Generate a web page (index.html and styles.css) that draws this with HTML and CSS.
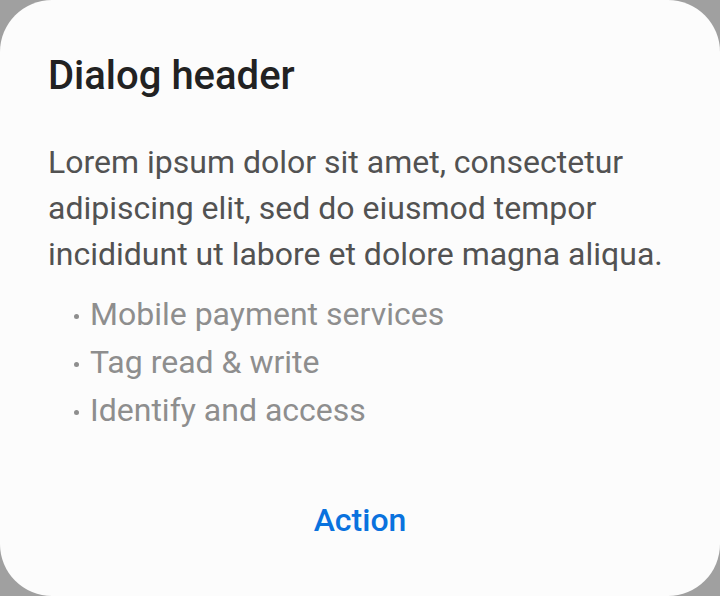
FILE: index.html
```html
<!DOCTYPE html>
<html>
<head>
<meta charset="utf-8">
<link rel="stylesheet" href="styles.css">
</head>
<body>
<div class="dialog">
  <h1 class="title">Dialog header</h1>
  <p class="body">Lorem ipsum dolor sit amet, consectetur adipiscing elit, sed do eiusmod tempor incididunt ut labore et dolore magna aliqua.</p>
  <ul class="list">
    <li>Mobile payment services</li>
    <li>Tag read &amp; write</li>
    <li>Identify and access</li>
  </ul>
  <div class="actions"><button class="action">Action</button></div>
</div>
</body>
</html>
```
FILE: styles.css
```css
html, body { margin: 0; padding: 0; }
body {
  background: #a0a0a0;
  width: 720px;
  height: 596px;
  font-family: Roboto, "Noto Sans", sans-serif;
}
.dialog {
  box-sizing: border-box;
  width: 720px;
  height: 596px;
  background: #fcfcfc;
  border-radius: 52px;
  padding: 52px 48px 0 48px;
  display: flex;
  flex-direction: column;
}
.title {
  margin: 0;
  font-size: 40px;
  font-weight: 500;
  line-height: 48px;
  color: #222222;
}
.body {
  margin: 39px 0 0 0;
  font-size: 32px;
  line-height: 46px;
  color: #525252;
}
.list {
  margin: 13px 0 0 0;
  padding: 0 0 0 26px;
  list-style: none;
  font-size: 32px;
  line-height: 48px;
  color: #8e8e8e;
}
.list li::before {
  content: "";
  display: inline-block;
  width: 5px;
  height: 5px;
  border-radius: 50%;
  background: currentColor;
  vertical-align: middle;
  margin-right: 11px;
}
.actions {
  margin-top: auto;
  height: 96px;
  display: flex;
  justify-content: center;
  align-items: flex-start;
}
.action {
  background: none;
  border: none;
  padding: 0;
  font-family: inherit;
  font-size: 32px;
  font-weight: 500;
  color: #0a72de;
  line-height: 40px;
}
```
